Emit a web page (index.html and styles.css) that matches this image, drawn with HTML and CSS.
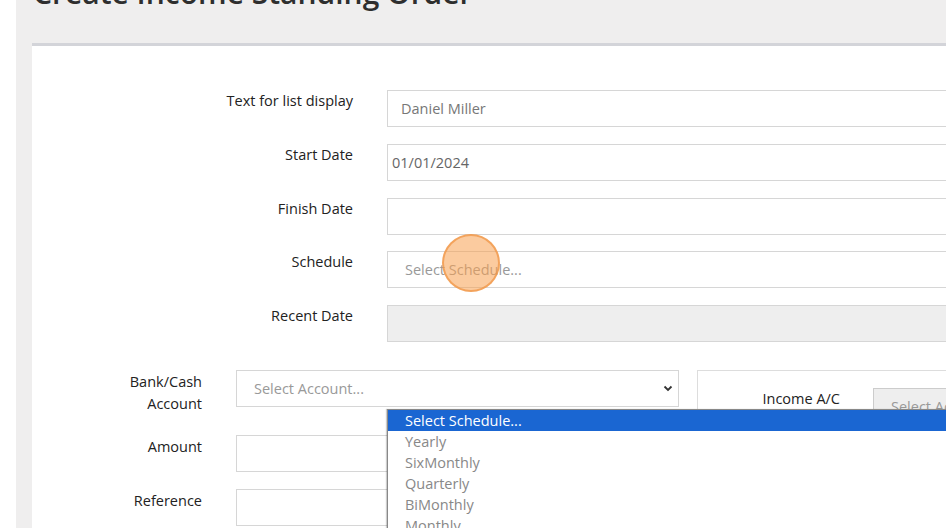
FILE: index.html
```html
<!DOCTYPE html>
<html lang="en">
<head>
    <meta charset="UTF-8">
    <title>Create Income Standing Order</title>
    <link rel="stylesheet" href="styles.css">
</head>
<body>
    <div class="page">
        <h1 class="title">Create Income Standing Order</h1>
        <div class="card">
            <div class="row">
                <label>Text for list display</label>
                <input class="field" type="text" value="Daniel Miller" readonly>
            </div>
            <div class="row">
                <label>Start Date</label>
                <input class="field date" type="text" value="01/01/2024" readonly>
            </div>
            <div class="row">
                <label>Finish Date</label>
                <input class="field" type="text" value="" readonly>
            </div>
            <div class="row">
                <label>Schedule</label>
                <div class="field placeholder">Select Schedule...</div>
            </div>
            <div class="row">
                <label>Recent Date</label>
                <div class="field disabled"></div>
            </div>

            <div class="lower">
                <div class="left">
                    <div class="row small bank">
                        <label>Bank/Cash Account</label>
                        <div class="field select placeholder">
                            <span>Select Account...</span>
                            <svg width="10" height="7" viewBox="0 0 10 7"><path d="M1.5 1.5 L5 5 L8.5 1.5" fill="none" stroke="#333" stroke-width="1.8"/></svg>
                        </div>
                    </div>
                    <div class="row small">
                        <label>Amount</label>
                        <input class="field" type="text" readonly>
                    </div>
                    <div class="row small">
                        <label>Reference</label>
                        <input class="field" type="text" readonly>
                    </div>
                </div>
                <div class="right">
                    <label>Income A/C</label>
                    <div class="field greyselect">Select Account...</div>
                </div>
            </div>
        </div>
    </div>

    <ul class="dropdown">
        <li class="active">Select Schedule...</li>
        <li>Yearly</li>
        <li>SixMonthly</li>
        <li>Quarterly</li>
        <li>BiMonthly</li>
        <li>Monthly</li>
    </ul>
    <div class="click"></div>
</body>
</html>
```

FILE: styles.css
```css
body {
    margin: 0;
    width: 946px;
    height: 528px;
    overflow: hidden;
    position: relative;
    background: #fff;
    font-family: 'Open Sans', 'Liberation Sans', sans-serif;
    font-size: 14.5px;
    color: #222;
}
.page {
    margin-left: 16px;
    padding-left: 16px;
    height: 640px;
    width: 1300px;
    background: #efeeee;
}
.title {
    margin: -25px 0 0 1px;
    height: 68px;
    font-size: 30px;
    font-weight: 600;
    line-height: 36px;
    color: #2e2e2e;
}
.card {
    background: #fff;
    border-top: 3px solid #d3d4d9;
    padding-top: 44px;
    height: 600px;
}
.row {
    display: grid;
    grid-template-columns: 321px 1fr;
    column-gap: 34px;
    align-items: start;
    margin-bottom: 16.75px;
}
.row label {
    text-align: right;
    padding-top: 1px;
    line-height: 20px;
}
.field {
    box-sizing: border-box;
    height: 37px;
    width: 100%;
    margin: 0;
    border: 1px solid #d6d6d6;
    background: #fff;
    font-family: inherit;
    font-size: 14.5px;
    color: #777;
    padding: 0 13px;
    line-height: 35px;
    outline: none;
}
.field.date {
    padding-left: 4px;
    color: #666;
}
.placeholder {
    color: #999;
    padding-left: 17px;
}
.disabled {
    background: #eee;
}
.lower {
    display: flex;
    margin-top: 28px;
    gap: 18px;
}
.left {
    width: 647px;
}
.row.small {
    grid-template-columns: 170px 1fr;
}
.row.small label {
    padding-left: 66px;
    line-height: 22px;
    padding-top: 1px;
}
.row.bank {
    min-height: 48px;
}
.select {
    display: flex;
    justify-content: space-between;
    align-items: center;
    padding-right: 5px;
}
.right {
    flex: 1;
    border: 1px solid #ddd;
    height: 200px;
    display: flex;
    align-items: flex-start;
    padding-top: 17px;
}
.right label {
    width: 142px;
    padding-right: 33px;
    text-align: right;
    line-height: 22px;
}
.greyselect {
    width: 300px;
    background: #eee;
    border-color: #ccc;
    color: #999;
    padding-left: 17px;
}
.dropdown {
    position: absolute;
    left: 387px;
    top: 409px;
    width: 700px;
    margin: 0;
    padding: 0;
    list-style: none;
    background: #fff;
    border: 1px solid #888;
    border-right: none;
    box-shadow: -1px 0 1px rgba(0, 0, 0, 0.2);
}
.dropdown li {
    height: 21px;
    line-height: 21px;
    padding-left: 17px;
    color: #888;
}
.dropdown li.active {
    background: #1a66d2;
    color: #fff;
}
.click {
    position: absolute;
    left: 442px;
    top: 234px;
    width: 54px;
    height: 54px;
    border-radius: 50%;
    background: rgba(248, 160, 80, 0.55);
    border: 2px solid rgba(240, 150, 70, 0.75);
}
```
